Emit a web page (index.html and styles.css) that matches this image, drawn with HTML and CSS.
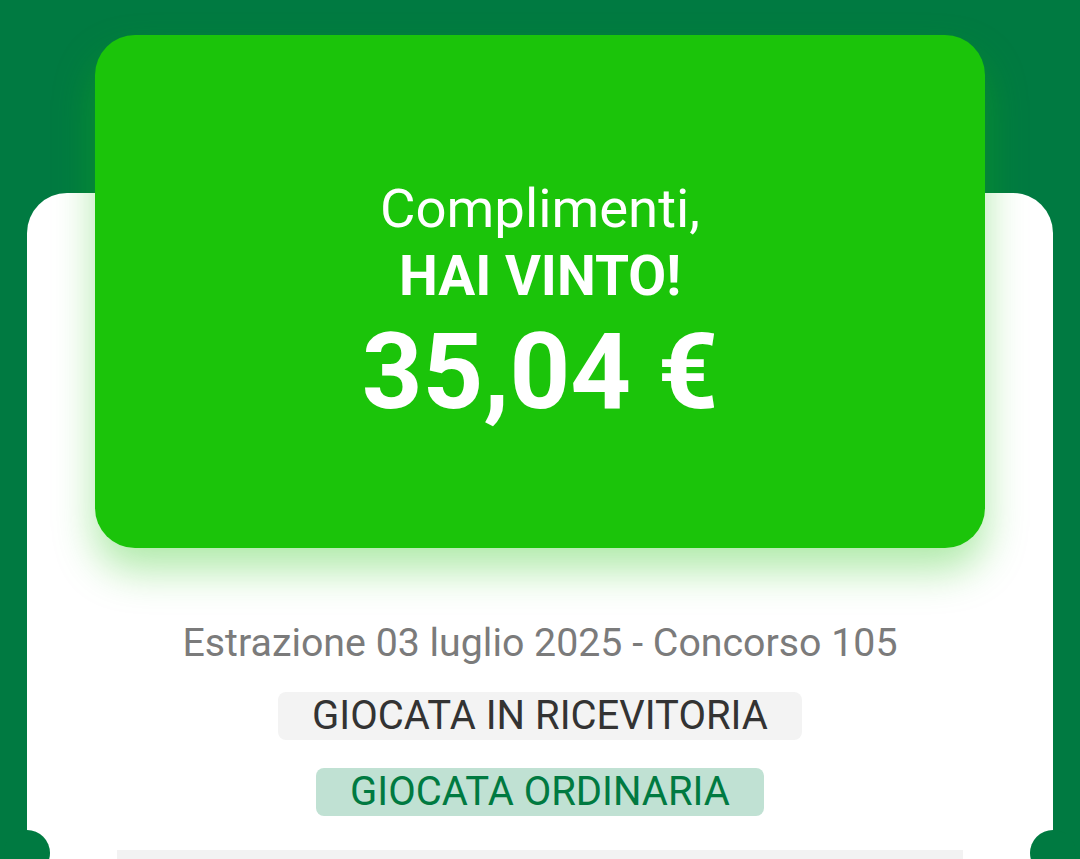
FILE: index.html
```html
<!DOCTYPE html>
<html lang="it">

<head>
    <meta charset="UTF-8" />
    <meta name="viewport" content="width=device-width, initial-scale=1.0" />
    <title>Esito giocata</title>
    <link rel="stylesheet" href="styles.css">
</head>

<body>
    <div class="page">
        <div class="ticket">
            <div class="win-card">
                <div class="win-hello">Complimenti,</div>
                <div class="win-title">HAI VINTO!</div>
                <div class="win-amount">35,04 €</div>
            </div>
            <div class="draw-info">Estrazione 03 luglio 2025 - Concorso 105</div>
            <div class="tag tag-grey">GIOCATA IN RICEVITORIA</div>
            <div class="tag tag-green">GIOCATA ORDINARIA</div>
            <div class="divider"></div>
            <span class="notch notch-left"></span>
            <span class="notch notch-right"></span>
        </div>
    </div>
</body>

</html>
```

FILE: styles.css
```css
* {
    margin: 0;
    padding: 0;
    box-sizing: border-box;
}

html,
body {
    height: 100%;
    overflow: hidden;
}

body {
    background-color: #007a41;
    font-family: Roboto, "Liberation Sans", sans-serif;
}

.page {
    padding: 193px 27px 0 27px;
}

.ticket {
    position: relative;
    background-color: #ffffff;
    border-radius: 40px 40px 0 0;
    height: 720px;
    display: flex;
    flex-direction: column;
    align-items: center;
}

.win-card {
    margin-top: -158px;
    width: 890px;
    height: 513px;
    background-color: #1bc40a;
    border-radius: 40px;
    box-shadow: 0 22px 40px rgba(27, 196, 10, 0.35);
    display: flex;
    flex-direction: column;
    align-items: center;
    color: #ffffff;
    padding-top: 139px;
}

.win-hello {
    font-size: 54.5px;
    line-height: 68px;
}

.win-title {
    font-size: 55px;
    font-weight: 700;
    line-height: 68px;
}

.win-amount {
    font-size: 106px;
    font-weight: 700;
    line-height: 124px;
}

.draw-info {
    margin-top: 71px;
    font-size: 39.3px;
    line-height: 48px;
    color: #7b7b7b;
}

.tag {
    font-size: 40px;
    line-height: 48px;
    padding: 0 34px;
    border-radius: 8px;
}

.tag-grey {
    margin-top: 25px;
    background-color: #f3f3f3;
    color: #333333;
}

.tag-green {
    margin-top: 28px;
    background-color: #c0e1d3;
    color: #007a41;
}

.divider {
    margin-top: 34px;
    width: 846px;
    height: 10px;
    background-color: #f2f2f2;
}

.notch {
    position: absolute;
    top: 637px;
    width: 46px;
    height: 46px;
    border-radius: 50%;
    background-color: #007a41;
}

.notch-left {
    left: -23px;
}

.notch-right {
    right: -23px;
}
```
